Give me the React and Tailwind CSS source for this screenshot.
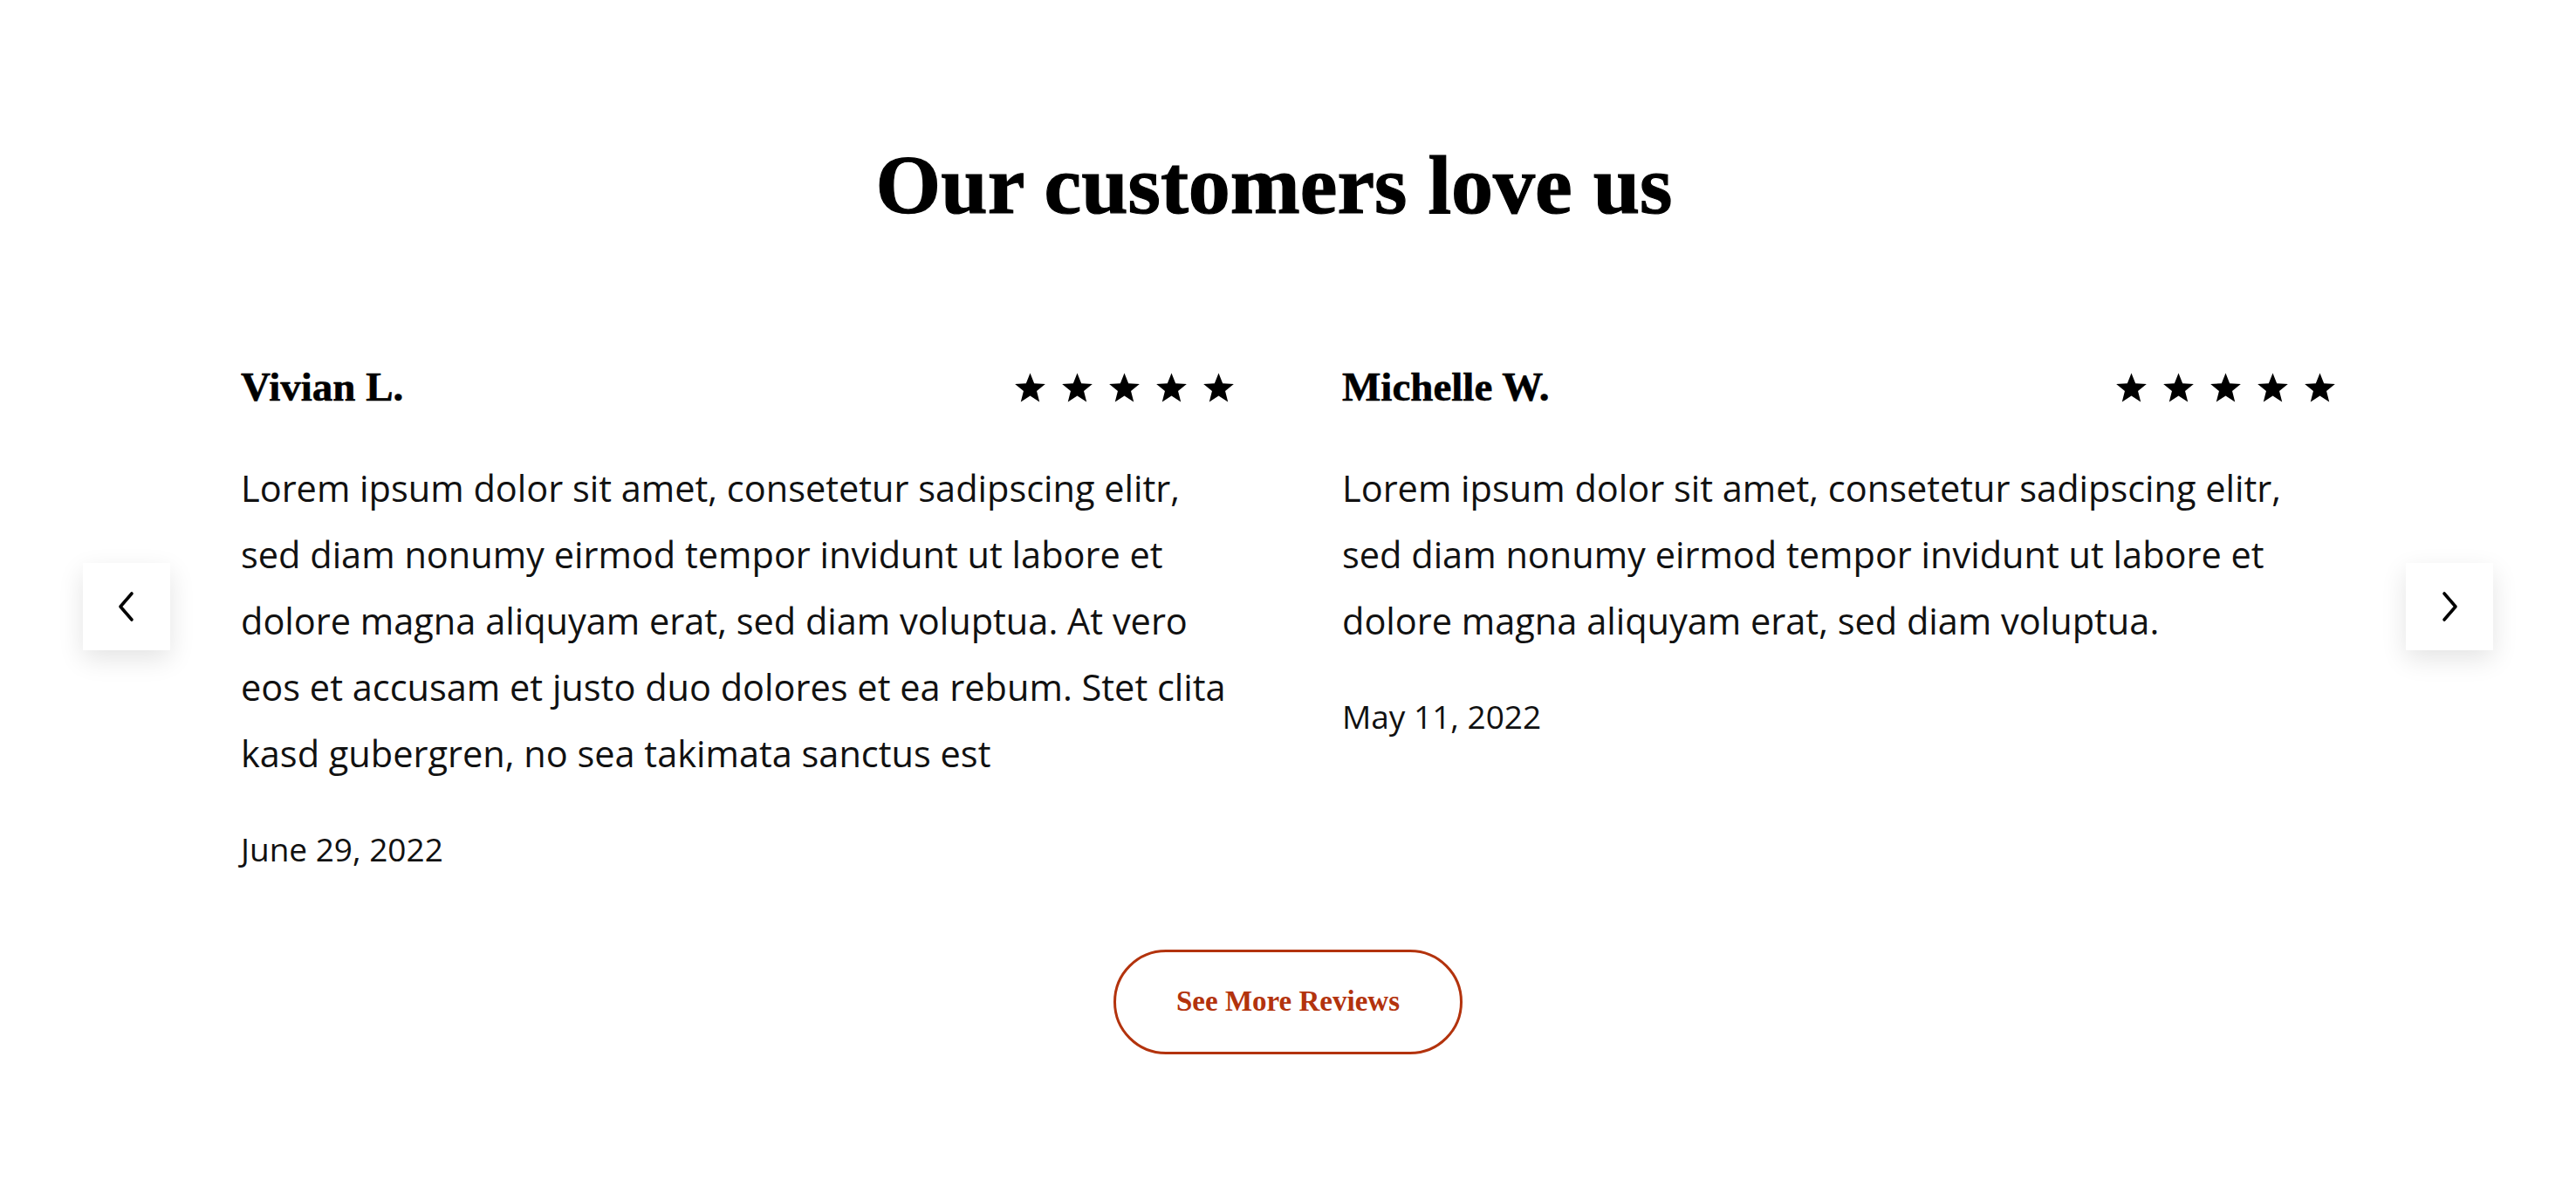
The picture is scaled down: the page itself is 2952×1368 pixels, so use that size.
import React from "react";

const reviews = [
    {
        name: "Vivian L.",
        lines: [
            "Lorem ipsum dolor sit amet, consetetur sadipscing elitr,",
            "sed diam nonumy eirmod tempor invidunt ut labore et",
            "dolore magna aliquyam erat, sed diam voluptua. At vero",
            "eos et accusam et justo duo dolores et ea rebum. Stet clita",
            "kasd gubergren, no sea takimata sanctus est",
        ],
        date: "June 29, 2022",
    },
    {
        name: "Michelle W.",
        lines: [
            "Lorem ipsum dolor sit amet, consetetur sadipscing elitr,",
            "sed diam nonumy eirmod tempor invidunt ut labore et",
            "dolore magna aliquyam erat, sed diam voluptua.",
        ],
        date: "May 11, 2022",
    },
];

const serif = { fontFamily: '"Liberation Serif", "Times New Roman", serif' };
const sans = { fontFamily: '"Open Sans", "Noto Sans", sans-serif' };

const Star = () => (
    <svg width="35" height="34" viewBox="0.5 0.5 23 22" className="block">
        <polygon
            points="12,0.6 15.06,8.39 23.41,8.89 16.95,14.21 19.05,22.31 12,17.8 4.95,22.31 7.05,14.21 0.59,8.89 8.94,8.39"
            fill="#000"
        />
    </svg>
);

const ArrowButton = ({ dir }) => (
    <button className="mt-[225px] w-[100px] h-[100px] shrink-0 bg-white flex items-center justify-center shadow-[0_10px_28px_rgba(0,0,0,0.11)]">
        <svg width="22" height="36" viewBox="0 0 22 36" fill="none">
            <path
                d={dir === "left" ? "M17 3 L4 18 L17 33" : "M5 3 L18 18 L5 33"}
                stroke="#000"
                strokeWidth="3.6"
                strokeLinecap="round"
                strokeLinejoin="round"
            />
        </svg>
    </button>
);

const ReviewCard = ({ review }) => (
    <div>
        {/* name + rating */}
        <div className="flex items-center justify-between h-[47px]">
            <h3
                className="text-[47px] leading-none font-bold text-black [-webkit-text-stroke:0.6px_black]"
                style={serif}
            >
                {review.name}
            </h3>
            <div className="flex gap-[19px]">
                {[0, 1, 2, 3, 4].map((i) => (
                    <Star key={i} />
                ))}
            </div>
        </div>

        <p className="mt-[54px] text-[41.5px] leading-[76px] text-[#111] whitespace-nowrap" style={sans}>
            {review.lines.map((line, i) => (
                <span key={i} className="block">
                    {line}
                </span>
            ))}
        </p>

        <p className="mt-[46px] text-[37px] leading-[1.4] text-[#111]" style={sans}>
            {review.date}
        </p>
    </div>
);

const App = () => {
    return (
        <div className="min-h-screen bg-white pt-[164px] pb-[160px]">
            <h2
                className="text-center pr-[32px] text-[96px] leading-none font-bold text-black [-webkit-text-stroke:1.2px_black]"
                style={serif}
            >
                Our customers love us
            </h2>

            <div className="mt-[160px] flex items-start px-[95px]">
                <ArrowButton dir="left" />
                <div className="flex-1 mx-[81px] grid grid-cols-2 gap-[124px]">
                    {reviews.map((review) => (
                        <ReviewCard key={review.name} review={review} />
                    ))}
                </div>
                <ArrowButton dir="right" />
            </div>

            <div className="mt-[89px] flex justify-center">
                <button
                    className="w-[400px] h-[120px] rounded-full border-[3px] border-[#b3330d] text-[#b3330d] text-[33px] font-bold"
                    style={serif}
                >
                    See More Reviews
                </button>
            </div>
        </div>
    );
};

export default App;
